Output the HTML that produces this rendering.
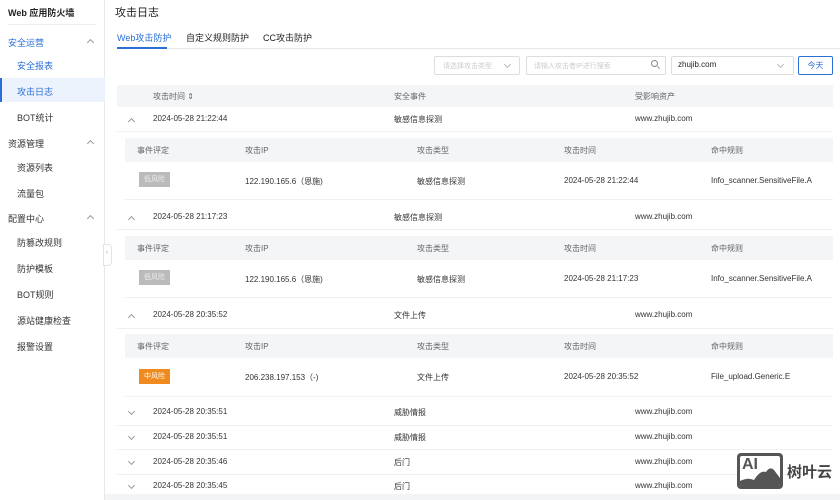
<!DOCTYPE html>
<html><head><meta charset="utf-8"><style>
*{margin:0;padding:0;box-sizing:border-box}
body{width:840px;height:500px;overflow:hidden;background:#fff;font-family:"Liberation Sans","Noto Sans CJK SC",sans-serif;color:#333;position:relative;font-size:8px}
.a{position:absolute;white-space:nowrap}
.side{position:absolute;left:0;top:0;width:105px;height:500px;border-right:1px solid #e8e8e8;background:#fff}
.gh{background:#f4f5f7}
.t{font-size:8px;color:#333}
.h{font-size:8px;color:#666}
.chev{position:absolute;width:5px;height:5px;border-left:1px solid #999;border-top:1px solid #999}
.up{transform:rotate(45deg)}
.dn{transform:rotate(225deg)}
.line{position:absolute;height:1px;background:#eef0f2}
</style></head><body>
<div class="side">
<div class="a" style="left:8px;top:6px;font-size:9px;font-weight:bold;color:#222">Web 应用防火墙</div>
<div class="line" style="left:8px;top:24px;width:88px;background:#eee"></div>
<div class="a" style="left:8px;top:36px;font-size:9px;color:#2b6fd6">安全运营</div><div class="chev up" style="left:88px;top:40px"></div>
<div class="a" style="left:17px;top:59px;font-size:9px;color:#2b6fd6">安全报表</div>
<div class="a" style="left:0;top:78px;width:105px;height:24px;background:#edf3fc;border-left:2px solid #2b6fd6"></div>
<div class="a" style="left:17px;top:85px;font-size:9px;color:#2b6fd6">攻击日志</div>
<div class="a" style="left:17px;top:111px;font-size:9px">BOT统计</div>
<div class="a" style="left:8px;top:137px;font-size:9px">资源管理</div><div class="chev up" style="left:88px;top:141px"></div>
<div class="a" style="left:17px;top:161px;font-size:9px">资源列表</div>
<div class="a" style="left:17px;top:187px;font-size:9px">流量包</div>
<div class="a" style="left:8px;top:212px;font-size:9px">配置中心</div><div class="chev up" style="left:88px;top:216px"></div>
<div class="a" style="left:17px;top:236px;font-size:9px">防篡改规则</div>
<div class="a" style="left:17px;top:262px;font-size:9px">防护模板</div>
<div class="a" style="left:17px;top:288px;font-size:9px">BOT规则</div>
<div class="a" style="left:17px;top:314px;font-size:9px">源站健康检查</div>
<div class="a" style="left:17px;top:340px;font-size:9px">报警设置</div>
</div>
<div class="a" style="left:103px;top:244px;width:9px;height:22px;background:#fff;border:1px solid #e3e3e3;border-radius:0 4px 4px 0"></div>
<div class="a" style="left:106px;top:250px;font-size:6px;color:#999">‹</div>

<div class="a" style="left:115px;top:4px;font-size:11px;color:#222">攻击日志</div>
<div class="a" style="left:117px;top:31px;font-size:9px;color:#2b6fd6">Web攻击防护</div>
<div class="a" style="left:186px;top:31px;font-size:9px;color:#222">自定义规则防护</div>
<div class="a" style="left:263px;top:31px;font-size:9px;color:#222">CC攻击防护</div>
<div class="line" style="left:117px;top:48px;width:723px;background:#e8e8e8"></div>
<div class="a" style="left:117px;top:47px;width:50px;height:2px;background:#2b6fd6"></div>

<div class="a" style="left:434px;top:56px;width:86px;height:19px;border:1px solid #ddd;border-radius:2px"></div>
<div class="a" style="left:443px;top:61px;font-size:7px;color:#ccc">请选择攻击类型</div>
<div class="chev dn" style="left:505px;top:62px;border-color:#bbb"></div>
<div class="a" style="left:526px;top:56px;width:140px;height:19px;border:1px solid #ddd;border-radius:2px"></div>
<div class="a" style="left:534px;top:61px;font-size:7px;color:#ccc">请输入攻击者IP进行搜索</div>
<div class="a" style="left:651px;top:60px;width:7px;height:7px;border:1px solid #888;border-radius:50%"></div>
<div class="a" style="left:657px;top:67px;width:3px;height:1px;background:#888;transform:rotate(45deg)"></div>
<div class="a" style="left:671px;top:56px;width:123px;height:19px;border:1px solid #ddd;border-radius:2px"></div>
<div class="a" style="left:678px;top:60px;font-size:8px;color:#222">zhujib.com</div>
<div class="chev dn" style="left:778px;top:62px;border-color:#bbb"></div>
<div class="a" style="left:798px;top:56px;width:35px;height:19px;border:1px solid #2b6fd6;border-radius:2px;color:#2b6fd6;font-size:8px;text-align:center;line-height:17px">今天</div>

<div class="a gh" style="left:117px;top:85px;width:716px;height:22px"></div>
<div class="a h" style="left:153px;top:91px">攻击时间 ⇕</div>
<div class="a h" style="left:394px;top:91px">安全事件</div>
<div class="a h" style="left:635px;top:91px">受影响资产</div>

<div class="chev up" style="left:129px;top:119px"></div>
<div class="a t" style="left:153px;top:114px">2024-05-28 21:22:44</div>
<div class="a t" style="left:394px;top:114px">敏感信息探测</div>
<div class="a t" style="left:635px;top:114px">www.zhujib.com</div>
<div class="line" style="left:117px;top:131px;width:716px"></div>
<div class="a gh" style="left:125px;top:138px;width:708px;height:24px"></div>
<div class="a h" style="left:137px;top:145px">事件评定</div><div class="a h" style="left:245px;top:145px">攻击IP</div><div class="a h" style="left:417px;top:145px">攻击类型</div><div class="a h" style="left:564px;top:145px">攻击时间</div><div class="a h" style="left:711px;top:145px">命中规则</div>
<div class="a" style="left:139px;top:172px;width:31px;height:15px;background:#bbb;color:#eee;font-size:7px;text-align:center;line-height:15px">低风险</div>
<div class="a t" style="left:245px;top:176px">122.190.165.6（恩施)</div><div class="a t" style="left:417px;top:176px">敏感信息探测</div><div class="a t" style="left:564px;top:176px">2024-05-28 21:22:44</div><div class="a t" style="left:711px;top:176px">Info_scanner.SensitiveFile.A</div>
<div class="line" style="left:125px;top:199px;width:708px"></div>

<div class="chev up" style="left:129px;top:217px"></div>
<div class="a t" style="left:153px;top:212px">2024-05-28 21:17:23</div>
<div class="a t" style="left:394px;top:212px">敏感信息探测</div>
<div class="a t" style="left:635px;top:212px">www.zhujib.com</div>
<div class="line" style="left:117px;top:229px;width:716px"></div>
<div class="a gh" style="left:125px;top:236px;width:708px;height:24px"></div>
<div class="a h" style="left:137px;top:243px">事件评定</div><div class="a h" style="left:245px;top:243px">攻击IP</div><div class="a h" style="left:417px;top:243px">攻击类型</div><div class="a h" style="left:564px;top:243px">攻击时间</div><div class="a h" style="left:711px;top:243px">命中规则</div>
<div class="a" style="left:139px;top:270px;width:31px;height:15px;background:#bbb;color:#eee;font-size:7px;text-align:center;line-height:15px">低风险</div>
<div class="a t" style="left:245px;top:274px">122.190.165.6（恩施)</div><div class="a t" style="left:417px;top:274px">敏感信息探测</div><div class="a t" style="left:564px;top:274px">2024-05-28 21:17:23</div><div class="a t" style="left:711px;top:274px">Info_scanner.SensitiveFile.A</div>
<div class="line" style="left:125px;top:297px;width:708px"></div>

<div class="chev up" style="left:129px;top:315px"></div>
<div class="a t" style="left:153px;top:310px">2024-05-28 20:35:52</div>
<div class="a t" style="left:394px;top:310px">文件上传</div>
<div class="a t" style="left:635px;top:310px">www.zhujib.com</div>
<div class="line" style="left:117px;top:328px;width:716px"></div>
<div class="a gh" style="left:125px;top:334px;width:708px;height:24px"></div>
<div class="a h" style="left:137px;top:341px">事件评定</div><div class="a h" style="left:245px;top:341px">攻击IP</div><div class="a h" style="left:417px;top:341px">攻击类型</div><div class="a h" style="left:564px;top:341px">攻击时间</div><div class="a h" style="left:711px;top:341px">命中规则</div>
<div class="a" style="left:139px;top:369px;width:31px;height:15px;background:#ef8a1f;color:#fff;font-size:7px;text-align:center;line-height:15px">中风险</div>
<div class="a t" style="left:245px;top:372px">206.238.197.153（-)</div><div class="a t" style="left:417px;top:372px">文件上传</div><div class="a t" style="left:564px;top:372px">2024-05-28 20:35:52</div><div class="a t" style="left:711px;top:372px">File_upload.Generic.E</div>
<div class="line" style="left:125px;top:396px;width:708px"></div>

<div class="chev dn" style="left:129px;top:409px"></div><div class="a t" style="left:153px;top:407px">2024-05-28 20:35:51</div><div class="a t" style="left:394px;top:407px">威胁情报</div><div class="a t" style="left:635px;top:407px">www.zhujib.com</div>
<div class="line" style="left:117px;top:425px;width:716px"></div>
<div class="chev dn" style="left:129px;top:434px"></div><div class="a t" style="left:153px;top:432px">2024-05-28 20:35:51</div><div class="a t" style="left:394px;top:432px">威胁情报</div><div class="a t" style="left:635px;top:432px">www.zhujib.com</div>
<div class="line" style="left:117px;top:449px;width:716px"></div>
<div class="chev dn" style="left:129px;top:459px"></div><div class="a t" style="left:153px;top:457px">2024-05-28 20:35:46</div><div class="a t" style="left:394px;top:457px">后门</div><div class="a t" style="left:635px;top:457px">www.zhujib.com</div>
<div class="line" style="left:117px;top:474px;width:716px"></div>
<div class="chev dn" style="left:129px;top:483px"></div><div class="a t" style="left:153px;top:481px">2024-05-28 20:35:45</div><div class="a t" style="left:394px;top:481px">后门</div><div class="a t" style="left:635px;top:481px">www.zhujib.com</div>
<div class="a" style="left:105px;top:494px;width:735px;height:6px;background:#f3f4f6"></div>

<div class="a" style="left:737px;top:453px;width:46px;height:36px;background:#555;border-radius:4px"></div>
<div class="a" style="left:740px;top:456px;width:40px;height:30px;background:#fff;border-radius:2px;overflow:hidden">
<svg width="40" height="30" style="position:absolute;left:0;top:0"><path d="M0 30 L0 25 Q8 21 14 24 Q20 14 26 16 Q30 10 34 14 Q37 18 40 22 L40 30Z" fill="#555"/></svg>
<div class="a" style="left:2px;top:0px;font-size:16px;line-height:18px;font-weight:bold;color:#555">AI</div>
</div>
<div class="a" style="left:787px;top:461px;font-size:15px;font-weight:bold;color:#444">树叶云</div>
</body></html>
